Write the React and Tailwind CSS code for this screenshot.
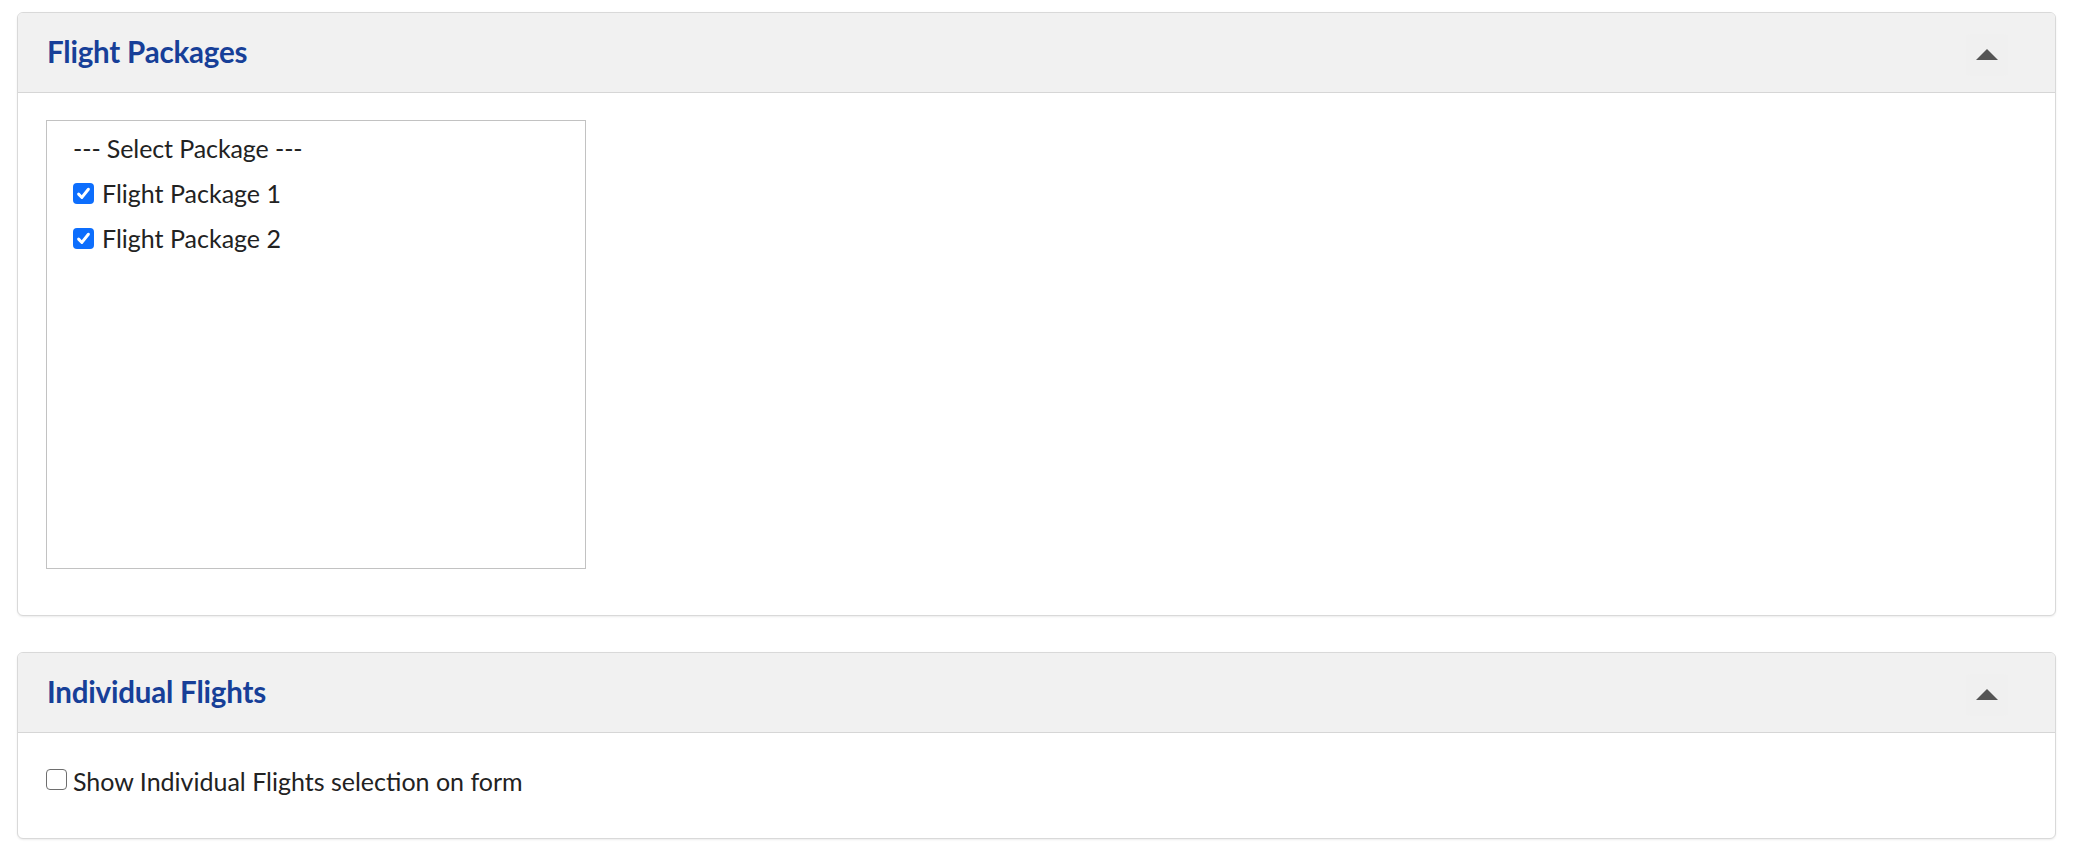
import { useState } from 'react';

const PACKAGES = ['Flight Package 1', 'Flight Package 2'];

function Caret() {
  return (
    <div className="w-[42px] h-[42px] flex items-center justify-center rounded bg-[#f0f0f0] mt-[4px]">
      <svg width="22" height="11" viewBox="0 0 22 11">
        <polygon points="0,11 11,0 22,11" fill="#555555" />
      </svg>
    </div>
  );
}

function Check({ checked, onClick, className = '' }) {
  return checked ? (
    <span
      onClick={onClick}
      className={`w-[21px] h-[21px] rounded-[4px] bg-[#0d6efd] flex items-center justify-center shrink-0 ${className}`}
    >
      <svg width="17" height="17" viewBox="0 0 16 16">
        <path d="M3.4 8.6 L6.5 11.7 L12.6 4" fill="none" stroke="#fff" strokeWidth="2.8" strokeLinecap="round" strokeLinejoin="round" />
      </svg>
    </span>
  ) : (
    <span
      onClick={onClick}
      className={`w-[21px] h-[21px] rounded-[4px] border-[1.5px] border-[#6e6e6e] bg-white shrink-0 ${className}`}
    />
  );
}

function Card({ title, children }) {
  return (
    <div className="border border-[#d9d9d9] rounded-[6px] bg-white shadow-[0_1px_2px_rgba(0,0,0,0.08)] overflow-hidden">
      <div className="h-[80px] bg-[#f1f1f1] border-b border-[#d6d6d6] flex items-center justify-between pl-[29px] pr-[47px]">
        <h2 className="text-[29.5px] font-bold text-[#173f98] tracking-[-0.2px]">{title}</h2>
        <Caret />
      </div>
      {children}
    </div>
  );
}

export default function App() {
  const [picked, setPicked] = useState([true, true]);
  const [showIndividual, setShowIndividual] = useState(false);

  return (
    <div className="min-h-[854px] bg-white pt-[12px] pl-[17px] pr-[30px] text-[#222] font-['Lato','Open_Sans',sans-serif]">
      {/* Flight packages */}
      <Card title="Flight Packages">
        <div className="pt-[27px] pb-[46px] pl-[28px]">
          <div className="w-[540px] h-[449px] border border-[#c2c2c2] pt-[5px] pl-[26px] text-[25px]">
            <div className="h-[45px] leading-[45px] tracking-[-0.1px]">--- Select Package ---</div>
            {PACKAGES.map((p, i) => (
              <div key={p} className="h-[45px] flex items-center gap-[8px]">
                <Check
                  checked={picked[i]}
                  onClick={() => setPicked(picked.map((v, j) => (j === i ? !v : v)))}
                />
                <span className="leading-[45px]">{p}</span>
              </div>
            ))}
          </div>
        </div>
      </Card>

      {/* Individual flights */}
      <div className="mt-[36px]">
        <Card title="Individual Flights">
          <div className="h-[105px] flex items-center gap-[6px] pl-[28px] pb-[8px] text-[25px]">
            <Check checked={showIndividual} onClick={() => setShowIndividual(!showIndividual)} className="mt-[-4px]" />
            <span>Show Individual Flights selection on form</span>
          </div>
        </Card>
      </div>
    </div>
  );
}
